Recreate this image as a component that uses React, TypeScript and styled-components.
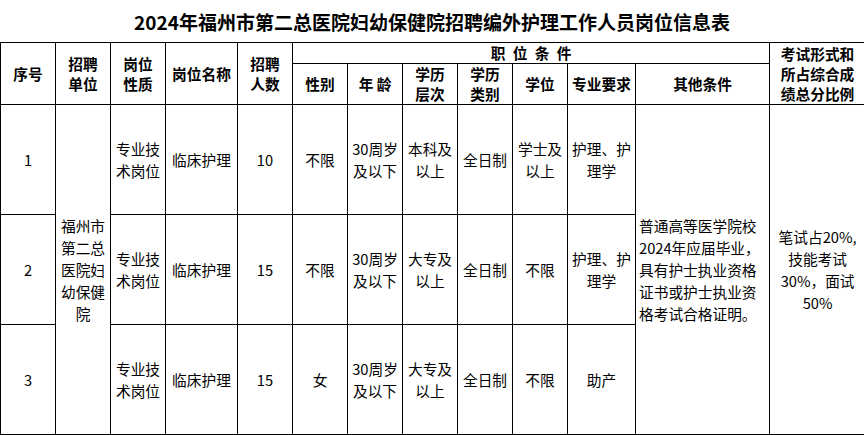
import React from "react";
import styled, { createGlobalStyle } from "styled-components";

const GlobalStyle = createGlobalStyle`
  html, body {
    margin: 0;
    padding: 0;
    background: #ffffff;
    overflow: hidden;
  }
  body {
    font-family: "Noto Sans CJK SC", "Noto Sans", sans-serif;
    color: #000;
  }
`;

const Page = styled.div`
  width: 864px;
  height: 435px;
  display: flex;
  flex-direction: column;
  overflow: hidden;
`;

const Title = styled.h1`
  margin: 0;
  height: 44px;
  display: flex;
  align-items: center;
  justify-content: center;
  font-size: 19px;
  font-weight: 700;
  letter-spacing: 0;
  color: #000;
`;

const Table = styled.table`
  width: 865px;
  border-collapse: collapse;
  table-layout: fixed;
`;

const Col = styled.col<{ $w: number }>`
  width: ${(p) => p.$w}px;
`;

const HeadRow = styled.tr<{ $h: number }>`
  height: ${(p) => p.$h}px;
`;

const BodyRow = styled.tr`
  height: 110px;
`;

const Th = styled.th<{ $spaced?: boolean }>`
  border: 1px solid #000;
  padding: 0 2px;
  font-size: 14.7px;
  font-weight: 700;
  line-height: 20px;
  text-align: center;
  vertical-align: middle;
  letter-spacing: ${(p) => (p.$spaced ? "0.5em" : "0")};
  text-indent: ${(p) => (p.$spaced ? "0.5em" : "0")};
`;

const Td = styled.td<{ $left?: boolean }>`
  border: 1px solid #000;
  padding: 0 ${(p) => (p.$left ? "2px 0 3px" : "2px")};
  font-size: 14.7px;
  font-weight: 400;
  line-height: 22px;
  text-align: ${(p) => (p.$left ? "left" : "center")};
  vertical-align: middle;
`;

const widths = [55, 55, 55, 72, 55, 55, 55, 55, 55, 55, 68, 134, 96];

type Row = {
  no: string;
  count: string;
  sex: string;
  level: string;
  degree: string;
  major: string;
};

const rows: Row[] = [
  { no: "1", count: "10", sex: "不限", level: "本科及以上", degree: "学士及以上", major: "护理、护理学" },
  { no: "2", count: "15", sex: "不限", level: "大专及以上", degree: "不限", major: "护理、护理学" },
  { no: "3", count: "15", sex: "女", level: "大专及以上", degree: "不限", major: "助产" },
];

export default function App() {
  return (
    <Page>
      <GlobalStyle />
      <Title>2024年福州市第二总医院妇幼保健院招聘编外护理工作人员岗位信息表</Title>
      <Table>
        <colgroup>
          {widths.map((w, i) => (
            <Col key={i} $w={w} />
          ))}
        </colgroup>
        <thead>
          <HeadRow $h={20}>
            <Th rowSpan={2}>序号</Th>
            <Th rowSpan={2}>招聘<br />单位</Th>
            <Th rowSpan={2}>岗位<br />性质</Th>
            <Th rowSpan={2}>岗位名称</Th>
            <Th rowSpan={2}>招聘<br />人数</Th>
            <Th colSpan={7} $spaced>职位条件</Th>
            <Th rowSpan={2}>考试形式和<br />所占综合成<br />绩总分比例</Th>
          </HeadRow>
          <HeadRow $h={40}>
            <Th>性别</Th>
            <Th>年 龄</Th>
            <Th>学历<br />层次</Th>
            <Th>学历<br />类别</Th>
            <Th>学位</Th>
            <Th>专业要求</Th>
            <Th>其他条件</Th>
          </HeadRow>
        </thead>
        <tbody>
          {rows.map((r, i) => (
            <BodyRow key={r.no}>
              <Td>{r.no}</Td>
              {i === 0 && <Td rowSpan={3}>福州市第二总医院妇幼保健院</Td>}
              <Td>专业技术岗位</Td>
              <Td>临床护理</Td>
              <Td>{r.count}</Td>
              <Td>{r.sex}</Td>
              <Td>30周岁及以下</Td>
              <Td>{r.level}</Td>
              <Td>全日制</Td>
              <Td>{r.degree}</Td>
              <Td>{r.major}</Td>
              {i === 0 && (
                <Td rowSpan={3} $left>
                  普通高等医学院校<br />
                  2024年应届毕业，<br />
                  具有护士执业资格<br />
                  证书或护士执业资<br />
                  格考试合格证明。
                </Td>
              )}
              {i === 0 && (
                <Td rowSpan={3}>
                  笔试占20%,<br />
                  技能考试<br />
                  30%，面试<br />
                  50%
                </Td>
              )}
            </BodyRow>
          ))}
        </tbody>
      </Table>
    </Page>
  );
}
